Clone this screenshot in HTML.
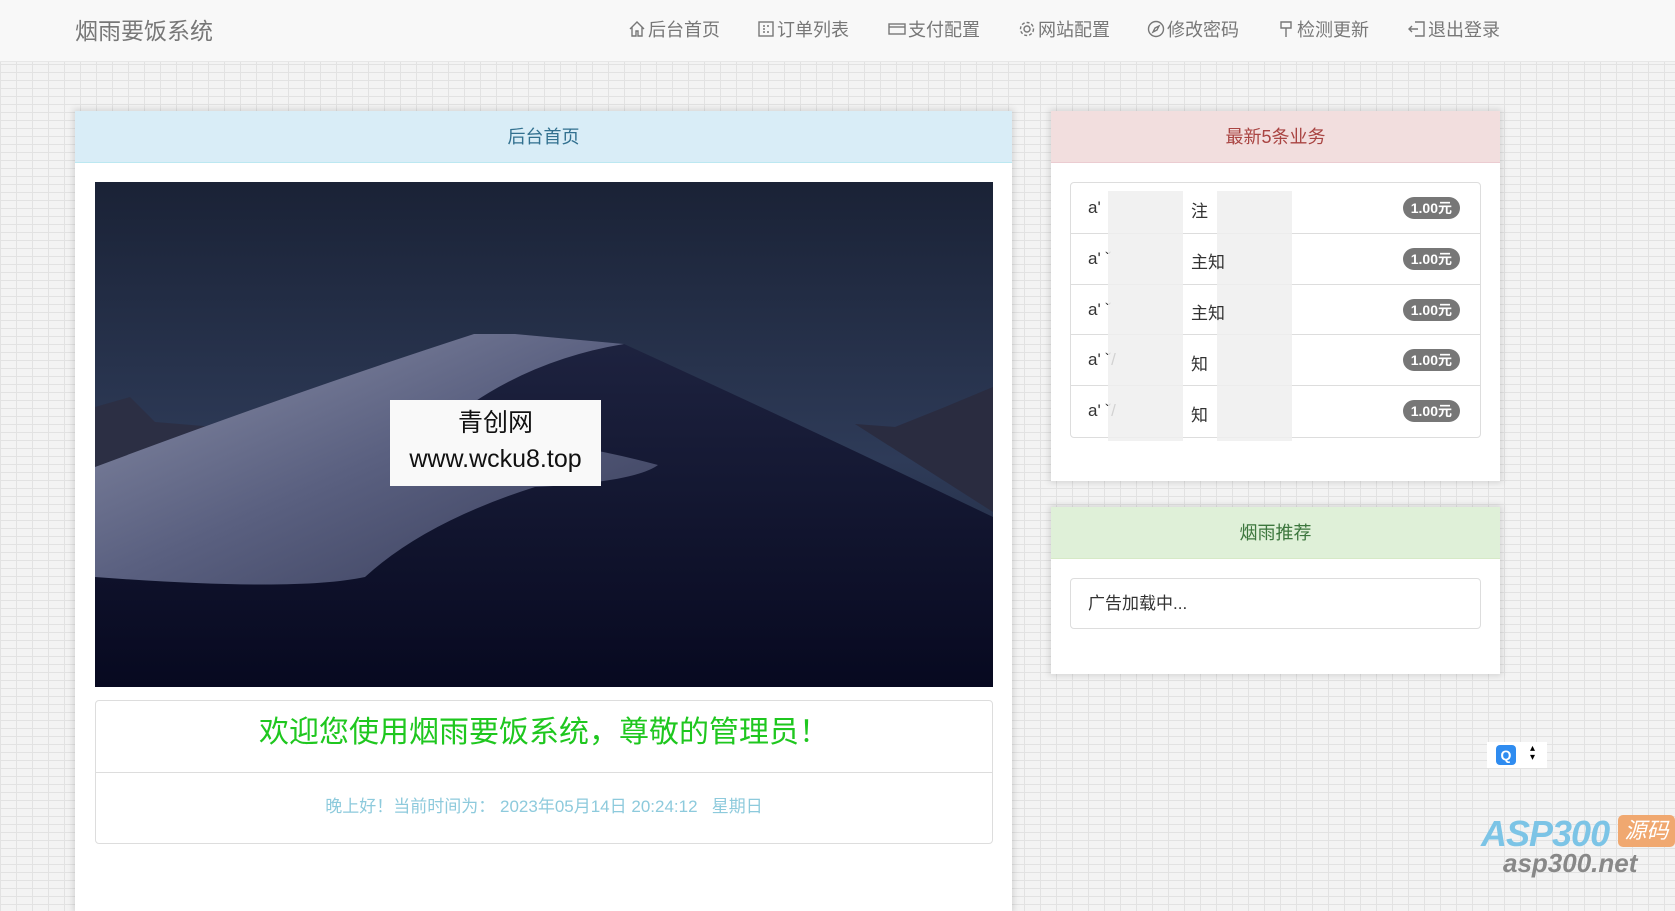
<!DOCTYPE html>
<html><head><meta charset="utf-8">
<style>
*{margin:0;padding:0;box-sizing:border-box}
body{width:1675px;height:889px;overflow:hidden;font-family:"Liberation Sans","Noto Sans CJK SC",sans-serif;
background-color:#f3f3f3;
background-image:
linear-gradient(#e2e2e2 1px,transparent 1px),
linear-gradient(90deg,#e2e2e2 1px,transparent 1px);
background-size:16px 8px,16px 8px;position:relative}
.hdr{position:absolute;left:0;top:0;width:1675px;height:62px;background:#f8f8f8;border-bottom:1px solid #e7e7e7}
.logo{position:absolute;left:75px;top:12px;font-size:23px;color:#777}
.nav{position:absolute;top:16px;font-size:18px;color:#777;white-space:nowrap}
.nav svg{vertical-align:-2px;margin-right:2px}
.panel{position:absolute;background:#fff;box-shadow:0 0 6px 2px rgba(0,0,0,.12)}
.ph{height:52px;line-height:52px;text-align:center;font-size:18px;border-bottom:1px solid #ddd}
.list{position:absolute;left:19px;right:19px;border:1px solid #ddd;border-radius:4px}
.row{height:50.8px;border-bottom:1px solid #ddd;position:relative;font-size:17px;color:#333;line-height:50px;padding-left:17px}
.row:last-child{border-bottom:none}
.badge{position:absolute;right:20px;top:14px;background:#777;color:#fff;font-size:14px;font-weight:bold;border-radius:11px;height:22px;line-height:22px;padding:0 8px}
.blur{position:absolute;background:#e6e6e6;opacity:.85}
</style></head><body>
<div class="hdr">
<div class="logo">烟雨要饭系统</div>
<div class="nav" style="left:628px"><svg width="18" height="18" viewBox="0 0 18 18" fill="none" stroke="#777" stroke-width="1.4"><path d="M2 9L9 2l7 7M4 7v9h4v-5h2v5h4V7"/></svg>后台首页</div>
<div class="nav" style="left:757px"><svg width="18" height="18" viewBox="0 0 18 18" fill="none" stroke="#777" stroke-width="1.4"><rect x="2" y="2" width="14" height="14"/><path d="M6 6h2M6 9h2M6 12h2M10 6h2M10 12h2"/></svg>订单列表</div>
<div class="nav" style="left:888px"><svg width="18" height="18" viewBox="0 0 18 18" fill="none" stroke="#777" stroke-width="1.4"><rect x="1" y="4" width="16" height="10"/><path d="M1 7h16"/></svg>支付配置</div>
<div class="nav" style="left:1018px"><svg width="18" height="18" viewBox="0 0 18 18" fill="none" stroke="#777" stroke-width="1.4"><circle cx="9" cy="9" r="3"/><circle cx="9" cy="9" r="6.5" stroke-dasharray="3 2"/></svg>网站配置</div>
<div class="nav" style="left:1147px"><svg width="18" height="18" viewBox="0 0 18 18" fill="none" stroke="#777" stroke-width="1.4"><circle cx="9" cy="9" r="7.5"/><path d="M12 6L8 8 6 12 10 10z"/></svg>修改密码</div>
<div class="nav" style="left:1277px"><svg width="18" height="18" viewBox="0 0 18 18" fill="none" stroke="#777" stroke-width="1.4"><path d="M4 2h10v6H4zM9 8v9"/></svg>检测更新</div>
<div class="nav" style="left:1408px"><svg width="18" height="18" viewBox="0 0 18 18" fill="none" stroke="#777" stroke-width="1.4"><path d="M7 2h9v14H7M1 9h9M4 6L1 9l3 3"/></svg>退出登录</div>
</div>

<div class="panel" style="left:75px;top:111px;width:937px;height:800px">
<div class="ph" style="background:#d9edf7;color:#31708f;border-color:#bce8f1">后台首页</div>
<svg style="position:absolute;left:20px;top:71px" width="898" height="505" viewBox="0 0 898 505">
<defs>
<linearGradient id="sky" x1="0" y1="0" x2="0" y2="1"><stop offset="0" stop-color="#1a2236"/><stop offset=".55" stop-color="#2e3b58"/><stop offset="1" stop-color="#1c2236"/></linearGradient>
<linearGradient id="lit" x1="0" y1="0" x2="1" y2="1"><stop offset="0" stop-color="#8a8fa8"/><stop offset=".5" stop-color="#5a6080"/><stop offset="1" stop-color="#363b58"/></linearGradient>
<linearGradient id="dk" x1="0" y1="0" x2="0" y2="1"><stop offset="0" stop-color="#1e2340"/><stop offset="1" stop-color="#070920"/></linearGradient>
</defs>
<rect width="898" height="505" fill="url(#sky)"/>
<path d="M0 225L35 215 60 240 120 245 140 260 0 300z" fill="#2c2f44"/>
<path d="M898 205L850 225 800 245 760 242 898 330z" fill="#2a2c40"/>
<path d="M0 285 Q200 210 379 152 L420 152 529 162 Q700 240 898 335 L898 505 0 505z" fill="url(#dk)"/>
<path d="M0 285 Q200 210 379 152 L420 152 529 162 Q420 180 340 250 Q460 255 563 283 Q540 300 440 305 Q330 340 270 395 Q200 410 0 395z" fill="url(#lit)"/>
</svg>
<div style="position:absolute;left:315px;top:289px;width:211px;height:86px;background:#f9f9f9;text-align:center;font-size:25px;line-height:36px;padding-top:5px;color:#111">青创网<br>www.wcku8.top</div>
<div style="position:absolute;left:20px;top:589px;width:898px;height:144px;border:1px solid #ddd;border-radius:4px">
<div style="height:72px;line-height:64px;text-align:center;font-size:30px;color:#1fc71f;border-bottom:1px solid #ddd">欢迎您使用烟雨要饭系统，尊敬的管理员！</div>
<div style="text-align:center;font-size:17px;color:#8dcadc;line-height:68px">晚上好！当前时间为：&nbsp;2023年05月14日 20:24:12 &nbsp; 星期日</div>
</div>
</div>

<div class="panel" style="left:1051px;top:111px;width:449px;height:370px">
<div class="ph" style="background:#f2dede;color:#a94442;border-color:#ebccd1">最新5条业务</div>
<div class="list" style="top:71px">
<div class="row">a'<span class="badge">1.00元</span></div>
<div class="row">a' ˇ<span class="badge">1.00元</span></div>
<div class="row">a' ˇ<span class="badge">1.00元</span></div>
<div class="row">a' ˇ/<span class="badge">1.00元</span></div>
<div class="row">a' ˇ/<span class="badge">1.00元</span></div>
</div>
<div class="blur" style="left:57px;top:80px;width:75px;height:250px;background:#eee"></div>
<div class="blur" style="left:166px;top:80px;width:75px;height:250px;background:#eee"></div>
<div style="position:absolute;left:140px;top:75px;font-size:17px;color:#333;line-height:51px">注<br>主知<br>主知<br>知<br>知</div>
</div>

<div class="panel" style="left:1051px;top:507px;width:449px;height:167px">
<div class="ph" style="background:#dff0d8;color:#3c763d;border-color:#d6e9c6">烟雨推荐</div>
<div style="position:absolute;left:19px;right:19px;top:71px;height:51px;border:1px solid #ddd;border-radius:4px;line-height:49px;padding-left:17px;font-size:17px;color:#333">广告加载中...</div>
</div>

<div style="position:absolute;left:1487px;top:742px;width:60px;height:26px;background:#fff"></div>
<div style="position:absolute;left:1496px;top:745px;width:20px;height:20px;background:#2f8cf0;border-radius:4px;color:#fff;font-size:14px;font-weight:bold;text-align:center;line-height:20px">Q</div>
<div style="position:absolute;left:1530px;top:744px;font-size:10px;line-height:9px">▴<br>▾</div>

<div style="position:absolute;left:1481px;top:813px;font-size:36px;font-style:italic;font-weight:bold;color:#7cc4e6;letter-spacing:-1px">ASP300</div>
<div style="position:absolute;left:1618px;top:815px;width:57px;height:32px;background:#f0a870;border-radius:5px;color:#fff;font-size:22px;font-style:italic;text-align:center;line-height:32px">源码</div>
<div style="position:absolute;left:1503px;top:848px;font-size:26px;font-style:italic;font-weight:bold;color:#888">asp300.net</div>
</body></html>
